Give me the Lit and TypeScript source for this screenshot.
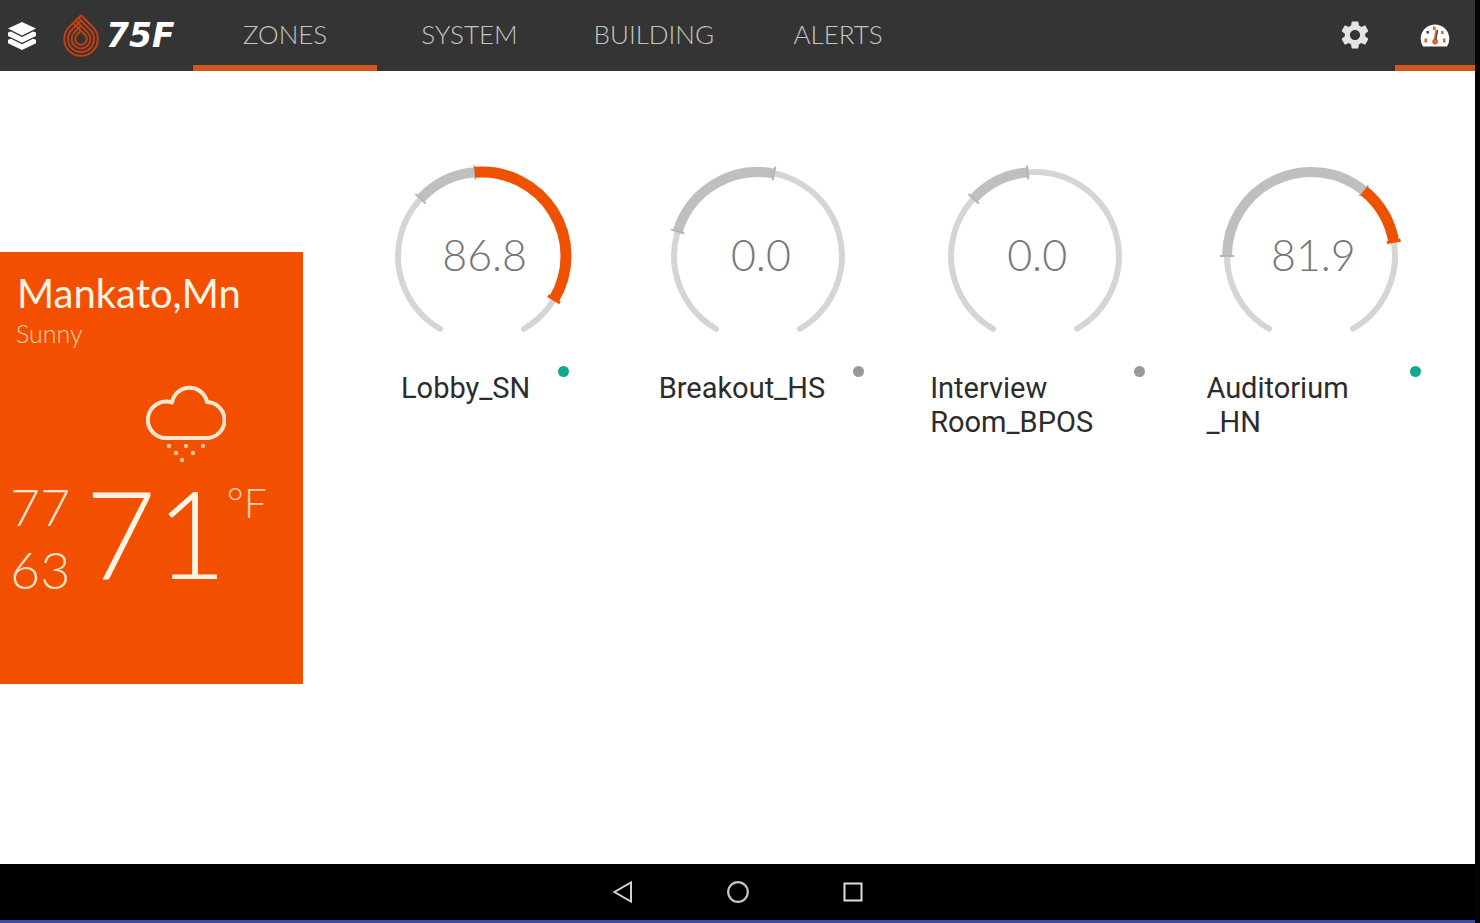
import { LitElement, html, svg, css, nothing } from "lit";
import { customElement, property } from "lit/decorators.js";

interface Zone {
  name: string[];
  value: string;
  online: boolean;
  from: number;
  to: number;
  heatTo?: number;
}

const ZONES: Zone[] = [
  { name: ["Lobby_SN"], value: "86.8", online: true, from: -47, to: -5, heatTo: 121 },
  { name: ["Breakout_HS"], value: "0.0", online: false, from: -73, to: 11 },
  { name: ["Interview ", "Room_BPOS"], value: "0.0", online: false, from: -47, to: -5 },
  { name: ["Auditorium", "_HN"], value: "81.9", online: true, from: -90, to: 39, heatTo: 80 },
];

const C = 95;
const R = 84;

/** Point on the dial; angles are degrees clockwise from twelve o'clock. */
const at = (deg: number, r = R) => {
  const a = (deg * Math.PI) / 180;
  return `${(C + r * Math.sin(a)).toFixed(2)} ${(C - r * Math.cos(a)).toFixed(2)}`;
};
const arc = (a: number, b: number) =>
  `M${at(a)} A${R} ${R} 0 ${b - a > 180 ? 1 : 0} 1 ${at(b)}`;
const tick = (a: number) => `M${at(a, R - 7)} L${at(a, R + 7)}`;

/** One ring of the drop logo: two 45° tangents closing over a circle at (19, 26). */
const ring = (r: number, over: number) => {
  const d = r * Math.SQRT1_2;
  const tip = 26 - r * Math.SQRT2;
  return `M19 ${tip} L${19 - d} ${26 - d} A${r} ${r} 0 1 0 ${19 + d} ${26 - d} L${19 - over} ${tip - over}`;
};

@customElement("zone-dial")
export class ZoneDial extends LitElement {
  @property({ attribute: false }) zone!: Zone;

  static styles = css`
    :host {
      display: flex;
      flex-direction: column;
      align-items: center;
    }
    .dial {
      display: grid;
      place-items: center;
    }
    .dial > * {
      grid-area: 1 / 1;
    }
    svg {
      display: block;
      width: 190px;
      height: 190px;
      fill: none;
    }
    .track { stroke: #d5d5d5; stroke-width: 6; stroke-linecap: round; }
    .range { stroke: #bfbfc0; stroke-width: 10; }
    .heat { stroke: #ee5200; stroke-width: 11; }
    .tick { stroke: #b5b5b5; stroke-width: 2; }
    .tick-heat { stroke: #ee5200; stroke-width: 3; }
    .value {
      font: 300 43px/54px Lato, sans-serif;
      color: #777;
      padding: 0 0 2px 5px;
    }
    .caption {
      display: flex;
      align-items: flex-start;
      gap: 28px;
      margin-top: 15px;
      padding-left: 6px;
    }
    .name {
      margin: 0;
      padding-top: 5px;
      font: 400 29px/34px Roboto, sans-serif;
      color: #2c2c2c;
    }
    .dot {
      width: 11px;
      height: 11px;
      border-radius: 50%;
      background: #999;
    }
    .dot.online { background: #0fa98f; }
    .narrow { width: 176px; }
  `;

  render() {
    const z = this.zone;
    return html`
      <div class="dial">
        <svg viewBox="0 0 190 190" aria-hidden="true">
          <path class="track" d=${arc(-150, 150)} />
          <path class="range" d=${arc(z.from, z.to)} />
          <path class="tick" d=${tick(z.from)} />
          <path class="tick" d=${tick(z.to)} />
          ${z.heatTo !== undefined
            ? svg`<path class="heat" d=${arc(z.to, z.heatTo)} /><path class="tick-heat" d=${tick(z.heatTo)} />`
            : nothing}
        </svg>
        <span class="value">${z.value}</span>
      </div>
      <div class="caption">
        <h2 class=${z.name.length > 1 ? "name narrow" : "name"}>${z.name.map((p, i) => (i ? html`<wbr />${p}` : p))}</h2>
        <span class=${z.online ? "dot online" : "dot"}></span>
      </div>
    `;
  }
}

@customElement("weather-card")
export class WeatherCard extends LitElement {
  static styles = css`
    :host {
      display: block;
      box-sizing: border-box;
      height: 432px;
      padding: 17px 10px;
      background: #f25000;
      color: #fff3e4;
      font-family: Lato, sans-serif;
    }
    .city {
      margin: 0;
      padding-left: 7px;
      font-size: 40px;
      line-height: 49px;
      font-weight: 400;
    }
    .sky {
      margin: 0;
      padding-left: 6px;
      font-size: 25px;
      line-height: 30px;
      font-weight: 300;
      color: #ffd3ae;
    }
    .icon {
      display: block;
      width: 80px;
      height: 80px;
      margin: 36px 0 11px 136px;
    }
    .temps {
      display: flex;
      align-items: flex-start;
      font-weight: 300;
    }
    .range {
      display: grid;
      font-size: 52px;
      line-height: 63px;
      color: #ffe3c8;
    }
    .now {
      margin-left: 15px;
      font-size: 122px;
      line-height: 114px;
    }
    .unit {
      padding-top: 4px;
      font-size: 41px;
      line-height: 48px;
      color: #ffd3ae;
    }
  `;

  render() {
    return html`
      <h1 class="city">Mankato,Mn</h1>
      <p class="sky">Sunny</p>
      <svg class="icon" viewBox="0 0 80 80" aria-hidden="true">
        <path d="M20.500 54H60A18 18 0 0 0 61 18A17.800 17.800 0 0 0 26 18.600A18.200 18.200 0 1 0 20.500 54Z"
          fill="none" stroke="#ffe6cf" stroke-width="4" stroke-linejoin="round" />
        <g fill="#ffc79c">
          <circle cx="23" cy="62" r="2.200" /><circle cx="40" cy="62" r="2.200" /><circle cx="57" cy="62" r="2.200" />
          <circle cx="30" cy="69" r="2.200" /><circle cx="47" cy="69" r="2.200" /><circle cx="36" cy="76" r="2.200" />
        </g>
      </svg>
      <div class="temps">
        <div class="range"><span>77</span><span>63</span></div>
        <span class="now">71</span>
        <span class="unit">°F</span>
      </div>
    `;
  }
}

@customElement("app-root")
export class AppRoot extends LitElement {
  static styles = css`
    :host {
      display: flex;
      flex-direction: column;
      box-sizing: border-box;
      min-height: 100vh;
      padding-right: 5px;
      background: #040404;
      font-family: Lato, sans-serif;
    }
    button {
      border: 0;
      padding: 0;
      background: none;
      color: inherit;
      font: inherit;
    }
    svg { display: block; }
    .bar {
      display: flex;
      height: 71px;
      background: #343434;
      color: #c9c9c9;
    }
    .brand {
      box-sizing: border-box;
      display: flex;
      align-items: center;
      width: 193px;
      padding-left: 7px;
    }
    .drop { margin-left: 25px; }
    .wordmark {
      margin-left: 6px;
      font: oblique 700 33px/40px "DejaVu Sans", sans-serif;
      color: #fff;
    }
    .tabs {
      display: grid;
      grid-template-columns: repeat(6, 1fr);
      flex: 1;
      margin-right: 16px;
    }
    .tab {
      box-sizing: border-box;
      display: flex;
      align-items: center;
      justify-content: center;
      border-bottom: 6px solid transparent;
      padding-top: 2px;
      font-size: 26px;
      line-height: 32px;
      font-weight: 300;
      color: #c4c4c4;
      text-decoration: none;
    }
    .tool {
      display: grid;
      place-items: center;
      box-sizing: border-box;
      width: 80px;
      border-bottom: 6px solid transparent;
      padding-top: 5px;
    }
    .active { border-bottom-color: #d2571b; }
    main {
      flex: 1;
      display: grid;
      grid-template-columns: 303px 1fr;
      align-items: center;
      background: #fff;
    }
    .zones {
      align-self: start;
      display: grid;
      grid-template-columns: repeat(4, 1fr);
      padding: 90px 26px 0 41px;
    }
    .system {
      display: flex;
      align-items: center;
      justify-content: center;
      gap: 91px;
      height: 56px;
      background: #000;
    }
    .edge {
      height: 3px;
      background: #3d48ac;
    }
  `;

  render() {
    return html`
      <header class="bar">
        <div class="brand">
          <button aria-label="Layers">
            <svg width="30" height="30" viewBox="0 0 30 30" fill="#fff">
              <path d="M15 1L29 7.500L15 14.500L1 7.500Z" />
              <path d="M1 11.500L4 10.500L15 16L26 10.500L29 11.500V15L15 21.800L1 15Z" />
              <path d="M1 18.800L4 17.800L15 23.300L26 17.800L29 18.800V22.200L15 29L1 22.200Z" />
            </svg>
          </button>
          <svg class="drop" width="38" height="46" viewBox="0 0 38 46" fill="none" stroke="#c63f12" stroke-width="2" aria-hidden="true">
            <path d=${ring(16.8, 0)} />
            <path d=${ring(13, 2.6)} />
            <path d=${ring(9.4, 5)} />
            <path d=${ring(5.8, 7.4)} />
          </svg>
          <span class="wordmark">75F</span>
        </div>
        <nav class="tabs">
          <a class="tab active" href="#zones">ZONES</a>
          <a class="tab" href="#system">SYSTEM</a>
          <a class="tab" href="#building">BUILDING</a>
          <a class="tab" href="#alerts">ALERTS</a>
        </nav>
        <button class="tool" aria-label="Settings">
          <svg width="34" height="34" viewBox="0 0 24 24" fill="#e4e4e4">
            <path d="M19.140 12.940c.04-.3.060-.61.060-.94 0-.32-.02-.64-.07-.94l2.030-1.580c.18-.14.230-.41.120-.61l-1.920-3.320c-.12-.22-.37-.29-.59-.22l-2.390.96c-.5-.38-1.030-.7-1.620-.94l-.36-2.540c-.04-.24-.24-.41-.48-.41h-3.840c-.24 0-.43.170-.47.410l-.36 2.540c-.59.240-1.130.570-1.620.94l-2.390-.96c-.22-.08-.47 0-.59.220L2.740 8.870c-.12.210-.08.470.120.610l2.030 1.580c-.05.3-.09.630-.09.940s.02.640.070.940l-2.030 1.580c-.18.140-.23.410-.12.610l1.920 3.320c.12.220.370.290.590.220l2.390-.96c.5.380 1.030.7 1.620.94l.36 2.540c.05.240.240.410.480.410h3.840c.24 0 .440-.17.470-.41l.36-2.540c.59-.24 1.130-.56 1.620-.94l2.390.96c.22.080.470 0 .590-.22l1.920-3.320c.12-.22.070-.47-.12-.61l-2.010-1.580zM12 15.600c-1.980 0-3.600-1.620-3.600-3.600s1.620-3.600 3.600-3.600 3.600 1.620 3.600 3.600-1.620 3.600-3.600 3.600z" />
          </svg>
        </button>
        <button class="tool active" aria-label="Dashboard">
          <svg width="30" height="24" viewBox="0 0 30 24">
            <path d="M3 23.500A14.300 14.300 0 1 1 27 23.500Z" fill="#fff" />
            <path d="M15.500 6.500L18 7L16.500 16A3 3 0 1 1 13.800 16Z" fill="#d2693a" />
            <path d="M17.500 7L16 17" stroke="#54403a" stroke-width="1.200" />
            <g fill="#d2693a">
              <rect x="13" y="3.500" width="2.500" height="3.500" /><rect x="4.500" y="15.500" width="2.500" height="4" />
              <rect x="23" y="15.500" width="2.500" height="4" /><rect x="21" y="8" width="2.500" height="3" />
            </g>
            <rect x="6.500" y="8" width="2.500" height="2.500" fill="#444" />
          </svg>
        </button>
      </header>
      <main>
        <weather-card></weather-card>
        <section class="zones">
          ${ZONES.map((z) => html`<zone-dial .zone=${z}></zone-dial>`)}
        </section>
      </main>
      <footer>
        <div class="system">
          <button aria-label="Back">
            <svg width="24" height="24" viewBox="0 0 24 24" fill="none" stroke="#d0d0d0" stroke-width="2">
              <path d="M20 2.500V21.500L3.500 12Z" />
            </svg>
          </button>
          <button aria-label="Home">
            <svg width="24" height="24" viewBox="0 0 24 24" fill="none" stroke="#c4c4c4" stroke-width="2.200">
              <circle cx="12" cy="12" r="9.800" />
            </svg>
          </button>
          <button aria-label="Recent apps">
            <svg width="24" height="24" viewBox="0 0 24 24" fill="none" stroke="#dedede" stroke-width="2">
              <rect x="3.500" y="3.500" width="17" height="17" />
            </svg>
          </button>
        </div>
        <div class="edge"></div>
      </footer>
    `;
  }
}
